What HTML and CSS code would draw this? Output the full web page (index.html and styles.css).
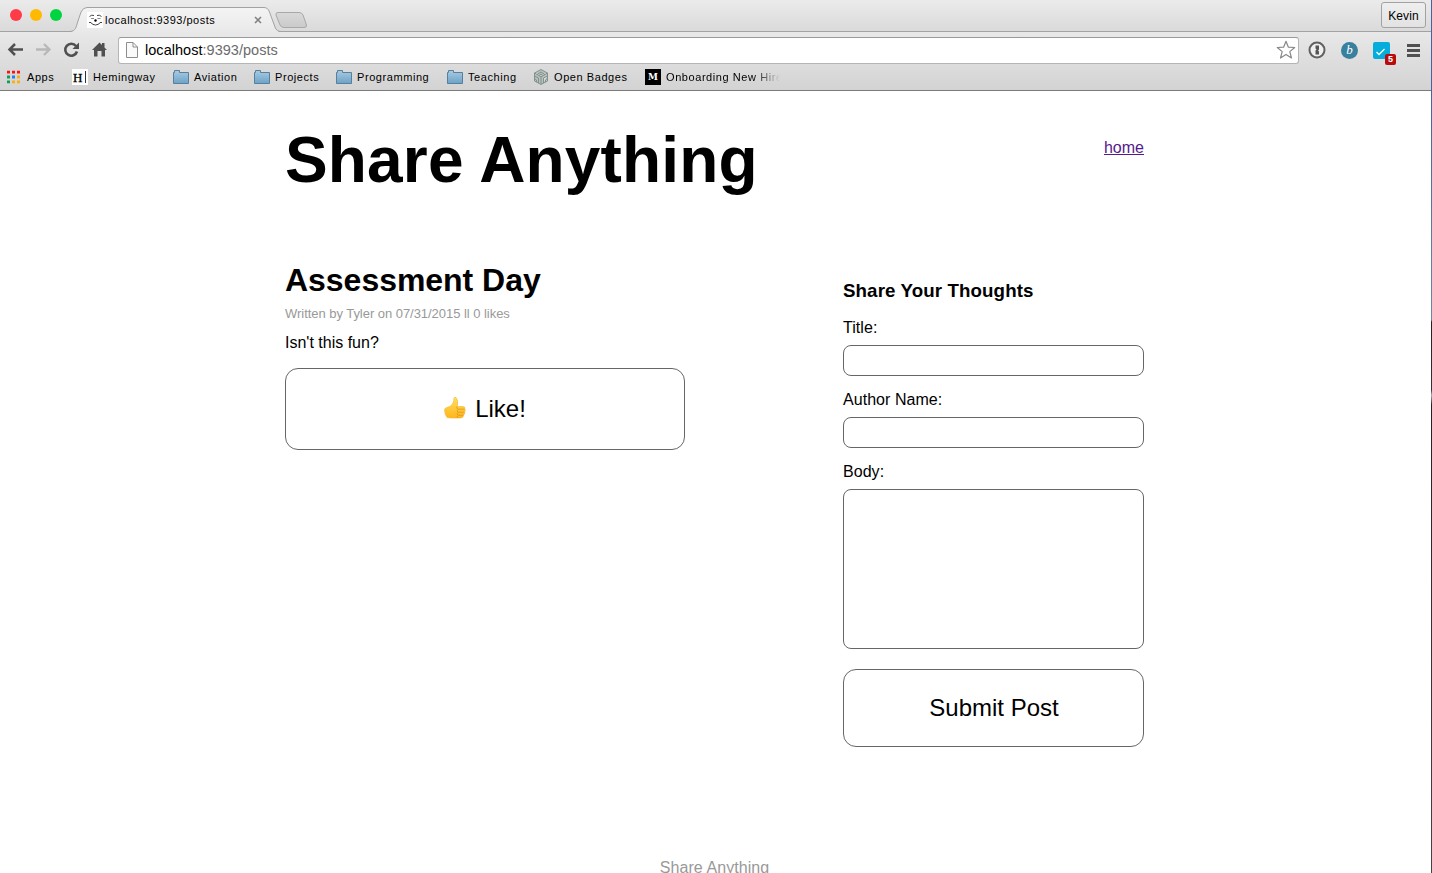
FILE: index.html
```html
<!DOCTYPE html>
<html lang="en">
<head>
<meta charset="utf-8">
<title>localhost:9393/posts</title>
<link rel="stylesheet" href="styles.css">
</head>
<body>
<div class="window">
  <header class="chrome">
    <div class="tabstrip">
      <svg class="tab-shapes" width="320" height="32" viewBox="0 0 320 32">
        <defs>
          <linearGradient id="tab" x2="0" y2="1"><stop stop-color="#f4f4f4"/><stop offset="1" stop-color="#e9e9e9"/></linearGradient>
          <linearGradient id="newtab" x2="0" y2="1"><stop stop-color="#d9d9d9"/><stop offset="1" stop-color="#cacaca"/></linearGradient>
        </defs>
        <path d="M70 32C76 31 76 27 78 21L81 12Q83 7.500 87 7.500H264Q268 7.500 269.500 12L275 27Q276.500 32 281 32Z" fill="url(#tab)"/>
        <path d="M0 31.500H70C76 31 76 27 78 21L81 12Q83 7.500 87 7.500H264Q268 7.500 269.500 12L275 27Q276.500 31.500 281 31.500H320" fill="none" stroke="#a2a2a2"/>
        <path d="M278 12.500H299Q302 12.500 303 15L306.500 25Q307 27.500 304 27.500H284Q281 27.500 280 25L276 15Q275.500 12.500 278 12.500Z" fill="url(#newtab)" stroke="#a8a8a8"/>
      </svg>
      <div class="lights"><i class="red"></i><i class="yellow"></i><i class="green"></i></div>
      <svg class="favicon" width="16" height="16" viewBox="0 0 16 16"><path fill="#fff" d="M0 0h16v16H0z"/><path d="M2.500 4.500Q4.500 2.500 7 3.500M10 3.500Q12.500 2.500 14.500 4.500M3.500 10.500Q8.500 15.500 13.500 10.500M2 10.500h2M13 10.500h2" fill="none" stroke="#444"/><path d="M4 6.500h3M10.500 6.500h3" stroke="#888"/><circle cx="8.500" cy="8.500" r="1.200"/></svg>
      <span class="tab-title">localhost:9393/posts</span>
      <svg class="close" width="8" height="8" viewBox="0 0 8 8"><path d="M1 1l6 6M7 1L1 7" stroke="#808080" stroke-width="1.600"/></svg>
      <span class="profile">Kevin</span>
    </div>
    <div class="toolbar">
      <svg class="nav" width="112" height="22" viewBox="0 0 112 22">
        <path d="M23 10.500H10M15 5L9.500 10.500L15 16" fill="none" stroke="#505050" stroke-width="2.500"/>
        <path d="M36 10.500H49M44 5L49.500 10.500L44 16" fill="none" stroke="#b8b8b8" stroke-width="2.300"/>
        <path d="M76 7A6 6 0 1 0 77 12.500" fill="none" stroke="#505050" stroke-width="2.600"/><path d="M79 3.500v6.500h-6.500z" fill="#505050"/>
        <path d="M92 11L99.500 3.500L102 6V4h2.500V8.500L107 11H105V17.500H101.500V12H97.500V17.500H94V11Z" fill="#505050"/>
      </svg>
      <div class="omnibox">
        <svg width="12" height="16" viewBox="0 0 12 16"><path d="M.5.5H7L11.500 5V15.500H.5ZM7 .5V5H11.500" fill="#fafafa" stroke="#8d8d8d"/></svg>
        <span class="url">localhost<em>:9393/posts</em></span>
        <svg class="star" width="20" height="20" viewBox="0 0 20 20"><path d="M10 1.300L12.400 7.200L18.700 7.500L13.800 11.600L15.500 18L10 14.400L4.500 18L6.200 11.600L1.300 7.500L7.600 7.200Z" fill="#fff" stroke="#888" stroke-width="1.200" stroke-linejoin="round"/></svg>
      </div>
      <div class="extensions">
        <svg width="18" height="18" viewBox="0 0 18 18"><circle cx="9" cy="9" r="7.500" fill="#efefef" stroke="#606060" stroke-width="2"/><path d="M7.500 4.500h3.500v4l-1 1 1 1v3H7.500v-4l1-1-1-1z" fill="#555"/></svg>
        <span class="b-badge">b</span>
        <span class="check"><svg width="17" height="17" viewBox="0 0 17 17"><rect width="17" height="17" rx="2" fill="#05addd"/><path d="M3.500 10l2.500 2.500 5.500-5.500" fill="none" stroke="#fff" stroke-width="1.300"/></svg><b>5</b></span>
        <svg class="menu" width="13" height="13" viewBox="0 0 13 13"><path d="M0 1.500h13M0 6.500h13M0 11.500h13" stroke="#505050" stroke-width="3"/></svg>
      </div>
    </div>
    <nav class="bookmarks">
      <span class="mark apps"><svg width="13" height="13" viewBox="0 0 13 13"><path fill="#f11" d="M0 0h3v3H0zM5 0h3v3H5zM10 0h3v3h-3z"/><path fill="#109d58" d="M0 5h3v3H0zM0 10h3v3H0z"/><path fill="#1a84f5" d="M5 5h3v3H5z"/><path fill="#ffad0a" d="M10 5h3v3h-3zM5 10h3v3H5zM10 10h3v3h-3z"/></svg>Apps</span>
      <span class="mark hem"><i class="h-icon">H</i>Hemingway</span>
      <span class="mark"><svg width="16" height="14" viewBox="0 0 16 14"><defs><linearGradient id="folder" x2="0" y2="1"><stop stop-color="#a9cbe2"/><stop offset="1" stop-color="#6ca2c7"/></linearGradient></defs><path id="folder-shape" d="M.5 13.500V2.500H1.500V.5H6.500V2.500H15.500V13.500Z" fill="url(#folder)" stroke="#587f9b"/></svg>Aviation</span>
      <span class="mark"><svg width="16" height="14"><use href="#folder-shape"/></svg>Projects</span>
      <span class="mark"><svg width="16" height="14"><use href="#folder-shape"/></svg>Programming</span>
      <span class="mark"><svg width="16" height="14"><use href="#folder-shape"/></svg>Teaching</span>
      <span class="mark badges"><svg width="14" height="16" viewBox="0 0 14 16"><path d="M7 .5L13.500 4V12L7 15.500L.5 12V4ZM7 8V15M.5 4L7 7.800L13.500 4M.5 7L4.500 9V14M.5 9.500L2.500 11V13M3 5.500L7 3L11 5.500M5 6.500L7 5L9 6.500M13.500 7L9.500 9V14M13.500 9.500L11.500 11V13" fill="#b7c1bd" stroke="#7c8c86" stroke-width=".9"/></svg>Open Badges</span>
      <span class="mark onboarding"><i class="m-icon">M</i><span class="fade">Onboarding New Hire</span></span>
    </nav>
  </header>
  <div class="page">
    <div class="masthead"><h1>Share Anything</h1><a href="#">home</a></div>
    <div class="columns">
      <article>
        <h2>Assessment Day</h2>
        <p class="meta">Written by Tyler on 07/31/2015 ll 0 likes</p>
        <p class="text">Isn't this fun?</p>
        <button class="like"><svg width="22" height="22" viewBox="0 0 22 22"><defs><linearGradient id="thumb" x2="0" y2="1"><stop stop-color="#ffe15a"/><stop offset="1" stop-color="#ffb51d"/></linearGradient></defs><path d="M.5 13Q.5 11 3 10.500Q7.500 9.500 9 6Q10.200 4 9.800 1.500Q10 0 12 .5Q14.500 3 13.300 9.500H19Q21.500 9.800 20.800 12Q22 13.500 20.500 15Q21.500 17 19.500 18Q19.500 21 16.500 21H9Q6 21 3 20.500Q.8 18 .5 13Z" fill="url(#thumb)" stroke="#f1b333" stroke-width=".6"/><path d="M20.500 12.200H14Q11.800 11.500 13 9.500M20.500 15.200H14Q12 14 14 12.500M19.500 18.200H14Q12 17 14 15.500M14 18.500Q12 20 14 21" fill="none" stroke="#e0951e" stroke-width=".8"/></svg><span>Like!</span></button>
      </article>
      <form>
        <h3>Share Your Thoughts</h3>
        <label>Title:<input type="text"></label>
        <label>Author Name:<input type="text"></label>
        <label>Body:<textarea></textarea></label>
        <button type="button" class="submit">Submit Post</button>
      </form>
    </div>
    <footer>Share Anything</footer>
  </div>
</div>
<div class="desktop-edge"></div>
</body>
</html>
```
FILE: styles.css
```css
* { box-sizing: border-box; }
body { margin: 0; height: 873px; display: flex; overflow: hidden; background: #fff; color: #000; font-family: "Liberation Sans", Arial, sans-serif; }
h1, h2, h3, p { margin: 0; }
svg { display: block; flex: none; }
i, em { font-style: normal; }
.window { width: 1431px; height: 873px; overflow: hidden; }
.desktop-edge { width: 1px; background: linear-gradient(#46619e 0, #46619e 90px, #6a87a4 320px, #222 322px, #333 390px, #aab 395px, #222 405px, #444 100%); }

.chrome { height: 91px; border-bottom: 1px solid #7b7b7b; background: linear-gradient(#e8e8e8 32px, #d3d3d3); }
.tabstrip { position: relative; height: 32px; display: flex; align-items: flex-start; background: linear-gradient(#ebebeb, #dadada); border-bottom: 1px solid #a2a2a2; }
.tab-shapes { position: absolute; left: 0; top: 0; }
.lights { position: relative; display: flex; gap: 8px; padding: 9px 0 0 10px; }
.lights i { width: 12px; height: 12px; border-radius: 50%; }
.red { background: #ff3b47; }
.yellow { background: #ffb900; }
.green { background: #00d541; }
.favicon { position: relative; margin: 12px 0 0 25px; }
.tab-title { position: relative; margin: 13px 0 0 2px; width: 149px; font-size: 11px; line-height: 14px; letter-spacing: .5px; white-space: nowrap; }
.close { position: relative; margin-top: 16px; }
.profile { margin: 2px 5px 0 auto; width: 45px; height: 26px; border: 1px solid #a2a2a2; border-radius: 3px; background: linear-gradient(#eee, #e2e2e2); font-size: 12px; line-height: 26px; text-align: center; letter-spacing: .1px; }
.toolbar { height: 34px; display: flex; align-items: center; padding: 2px 11px 0 0; }
.nav { margin-right: 6px; }
.omnibox { width: 1181px; height: 27px; display: flex; align-items: center; border: 1px solid #b5b5b5; border-top-color: #999; border-radius: 3px; background: #fff; padding: 0 2px 0 7px; }
.url { margin-left: 7px; font-size: 14.5px; line-height: 18px; letter-spacing: .03px; }
.url em { color: #6b6b6b; }
.star { margin-left: auto; }
.extensions { flex: 1; display: flex; align-items: center; padding-left: 9px; }
.b-badge { width: 17px; height: 17px; margin-left: 15px; border-radius: 50%; background: #39809f; color: #fff; font: italic 13px/16px "Liberation Serif", serif; text-align: center; }
.check { position: relative; margin-left: 15px; }
.check b { position: absolute; left: 12px; top: 12px; width: 11px; height: 11px; border-radius: 2px; background: #b80c0c; color: #fff; font-size: 9px; line-height: 11px; text-align: center; }
.menu { margin-left: auto; }
.bookmarks { height: 24px; display: grid; grid-template-columns: 65px 101px 81px 82px 111px 87px 111px 150px; padding-left: 7px; font-size: 11px; letter-spacing: .57px; }
.mark { display: flex; align-items: center; gap: 5px; height: 22px; white-space: nowrap; }
.mark svg { margin-top: -1px; }
.mark.apps svg { margin-top: 0; height: 13px; transform: translateY(-.5px); }
.apps { gap: 7px; }
.h-icon { width: 16px; height: 16px; padding-left: 1px; background: linear-gradient(#333, #333) 13px 2px / 1px 12px no-repeat #fff; font: 13px/17px "Liberation Serif", serif; letter-spacing: 0; -webkit-text-stroke: .3px #000; }
.m-icon { width: 16px; height: 16px; background: #000; color: #fff; font: bold 9px/16px "DejaVu Serif", serif; letter-spacing: 0; text-align: center; }
.badges { gap: 6px; }
.fade { width: 125px; line-height: 16px; -webkit-mask-image: linear-gradient(90deg, #000 88px, transparent 114px); mask-image: linear-gradient(90deg, #000 88px, transparent 114px); }

.page { width: 860px; margin-left: 285px; padding-top: 32px; }
.masthead { display: flex; justify-content: space-between; height: 139px; }
h1 { font-size: 64px; line-height: 74px; letter-spacing: .15px; }
.masthead a { margin: 16px 1px 0 0; font-size: 16px; line-height: 18px; color: #551a8b; }
.columns { display: flex; justify-content: space-between; height: 597px; }
article { width: 400px; }
h2 { font-size: 32px; line-height: 37px; letter-spacing: -.03px; }
.meta { margin-top: 7px; font-size: 13px; line-height: 15px; letter-spacing: -.04px; color: #999; white-space: nowrap; }
.text { margin-top: 13px; font-size: 16px; line-height: 18px; }
button { display: flex; align-items: center; justify-content: center; padding: 0; background: #fff; border: 1px solid #666; color: #000; font-family: inherit; font-size: 24px; border-radius: 13px; }
.like { width: 400px; height: 82px; margin-top: 16px; gap: 9px; }
.like svg { margin-top: -3px; }
form { width: 302px; padding: 18px 1px 0 0; }
h3 { font-size: 18.72px; line-height: 22px; letter-spacing: .11px; }
label { display: block; font-size: 16px; line-height: 18px; letter-spacing: .05px; }
h3 + label { margin-top: 17px; }
label + label { margin-top: 15px; }
input, textarea { display: block; width: 301px; height: 31px; margin: 8px 0 0; padding: 4px 8px; border: 1px solid #666; border-radius: 8px; background: #fff; resize: none; }
textarea { height: 160px; }
.submit { width: 301px; height: 78px; margin-top: 20px; padding-left: 1px; }
footer { width: 859px; font-size: 16px; line-height: 18px; letter-spacing: .08px; color: #999; text-align: center; }
```
